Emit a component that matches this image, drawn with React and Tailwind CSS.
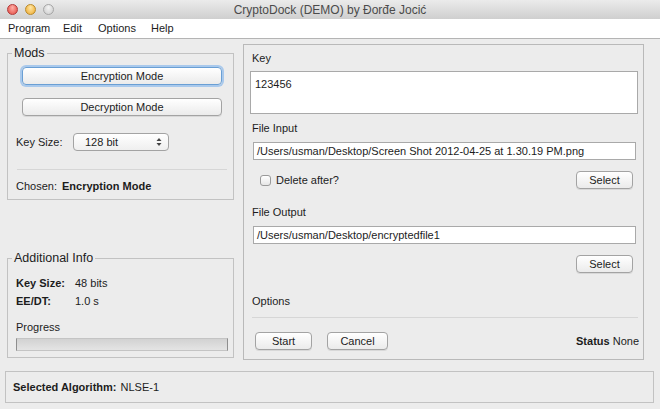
import React from "react";

const MacButton = ({ children, className = "", focused = false }) => (
  <div
    className={`flex items-center justify-center rounded-[4px] border bg-linear-to-b from-white to-[#ebebeb] text-[11px] leading-none text-[#1c1c1c] ${
      focused ? "border-[#6a9fd4] shadow-[0_0_0_2px_#a9c9ec]" : "border-[#a3a3a3] shadow-[0_1px_0_#d8d8d8]"
    } ${className}`}
  >
    {children}
  </div>
);

const TextField = ({ value, className = "" }) => (
  <div className={`flex items-center border border-[#a9a9a9] bg-white pl-[3px] text-[11px] leading-none text-[#1c1c1c] ${className}`}>
    {value}
  </div>
);

const App = () => {
  return (
    <div className="h-[409px] w-[660px] overflow-hidden bg-[#ececec] font-['Liberation_Sans',Arial,sans-serif] text-[#1c1c1c]">
      {/* title bar */}
      <div className="relative flex h-[19px] items-center justify-center bg-linear-to-b from-[#ebebeb] to-[#cfcfcf]">
        <div className="absolute left-[7px] top-[4px] flex gap-[7px]">
          <span className="h-[11px] w-[11px] rounded-full border border-[#b23a3a] bg-radial-[at_50%_30%] from-[#ffb0a8] to-[#e2463d]" />
          <span className="h-[11px] w-[11px] rounded-full border border-[#b98a2a] bg-radial-[at_50%_30%] from-[#ffe7a6] to-[#eda72a]" />
          <span className="h-[11px] w-[11px] rounded-full border border-[#a6a6a6] bg-radial-[at_50%_30%] from-[#f4f4f4] to-[#c9c9c9]" />
        </div>
        <span className="text-[12px] leading-none text-[#4b4b4b]">CryptoDock (DEMO) by Đorđe Jocić</span>
      </div>

      {/* menu bar */}
      <div className="flex h-[20px] items-center border-b border-[#b4b4b4] bg-white pl-[8px] text-[11px] leading-none">
        <span className="w-[55px]">Program</span>
        <span className="w-[35px]">Edit</span>
        <span className="w-[53px]">Options</span>
        <span>Help</span>
      </div>

      {/* main */}
      <div className="flex gap-[9px] pl-[7px] pt-[5px]">
        <div className="flex w-[227px] flex-col">
          <fieldset className="mt-[2px] h-[154px] border border-[#c2c2c2]">
            <legend className="ml-[4px] px-[2px] text-[12.5px] leading-[14px]">Mods</legend>
            <div className="pl-[8px] pt-[7px] text-[11px]">
              <MacButton focused className="ml-[6px] h-[18px] w-[200px]">Encryption Mode</MacButton>
              <MacButton className="ml-[6px] mt-[13px] h-[18px] w-[200px]">Decryption Mode</MacButton>
              <div className="mt-[17px] flex h-[18px] items-center">
                <span className="w-[57px]">Key Size:</span>
                <div className="flex h-[18px] w-[96px] items-center justify-between rounded-[4px] border border-[#a3a3a3] bg-linear-to-b from-white to-[#efefef] pl-[11px] pr-[6px]">
                  <span>128 bit</span>
                  <svg width="6" height="10" viewBox="0 0 6 10">
                    <path d="M3 1 L5.5 4 H0.5 Z" fill="#444" />
                    <path d="M3 9 L5.5 6 H0.5 Z" fill="#444" />
                  </svg>
                </div>
              </div>
              <div className="ml-[1px] mt-[18px] h-px w-[210px] bg-[#d6d6d6]" />
              <div className="mt-[9px] leading-[14px]">
                Chosen: <span className="ml-[2px] font-bold">Encryption Mode</span>
              </div>
            </div>
          </fieldset>

          <fieldset className="mt-[51px] h-[107px] border border-[#c2c2c2]">
            <legend className="ml-[4px] px-[2px] text-[12.5px] leading-[14px]">Additional Info</legend>
            <div className="pl-[8px] pt-[11px] text-[11px] leading-[14px]">
              <div className="flex">
                <span className="w-[59px] font-bold">Key Size:</span>
                <span>48 bits</span>
              </div>
              <div className="mt-[4px] flex">
                <span className="w-[59px] font-bold">EE/DT:</span>
                <span>1.0 s</span>
              </div>
              <div className="mt-[12px]">Progress</div>
              <div className="mt-[4px] h-[13px] w-[212px] border-x border-[#8e8e8e] border-y-[#c4c4c4] border-y bg-linear-to-b from-[#d2d2d2] to-[#e4e4e4]" />
            </div>
          </fieldset>
        </div>

        <div className="h-[316px] w-[401px] border border-[#b9b9b9] text-[11px] leading-[14px]">
          <div className="ml-[8px] mt-[6px]">Key</div>
          <div className="ml-[6px] mt-[6px] h-[43px] w-[388px] border border-[#a9a9a9] bg-white pl-[4px] pt-[5px]">123456</div>
          <div className="ml-[8px] mt-[7px]">File Input</div>
          <TextField
            className="ml-[9px] mt-[7px] h-[18px] w-[383px]"
            value="/Users/usman/Desktop/Screen Shot 2012-04-25 at 1.30.19 PM.png"
          />
          <div className="mt-[11px] flex h-[18px] items-center justify-between pl-[16px] pr-[10px]">
            <div className="flex items-center">
              <span className="h-[11px] w-[11px] rounded-[3px] border border-[#9a9a9a] bg-linear-to-b from-white to-[#e6e6e6]" />
              <span className="ml-[5px]">Delete after?</span>
            </div>
            <MacButton className="h-[18px] w-[57px]">Select</MacButton>
          </div>
          <div className="ml-[8px] mt-[16px]">File Output</div>
          <TextField className="ml-[9px] mt-[7px] h-[18px] w-[383px]" value="/Users/usman/Desktop/encryptedfile1" />
          <div className="mt-[11px] flex justify-end pr-[10px]">
            <MacButton className="h-[18px] w-[57px]">Select</MacButton>
          </div>
          <div className="ml-[8px] mt-[21px]">Options</div>
          <div className="ml-[8px] mt-[9px] h-px w-[386px] bg-[#d6d6d6]" />
          <div className="mt-[14px] flex h-[18px] items-center pl-[11px] pr-[4px]">
            <MacButton className="h-[18px] w-[57px]">Start</MacButton>
            <MacButton className="ml-[15px] h-[18px] w-[61px]">Cancel</MacButton>
            <div className="ml-auto">
              <span className="font-bold">Status</span> None
            </div>
          </div>
        </div>
      </div>

      {/* status bar */}
      <div className="ml-[5px] mt-[11px] flex h-[32px] w-[649px] items-center border border-[#c2c2c2] pl-[7px] text-[11px]">
        <span className="font-bold">Selected Algorithm:</span>
        <span className="ml-[4px]">NLSE-1</span>
      </div>
    </div>
  );
};

export default App;
